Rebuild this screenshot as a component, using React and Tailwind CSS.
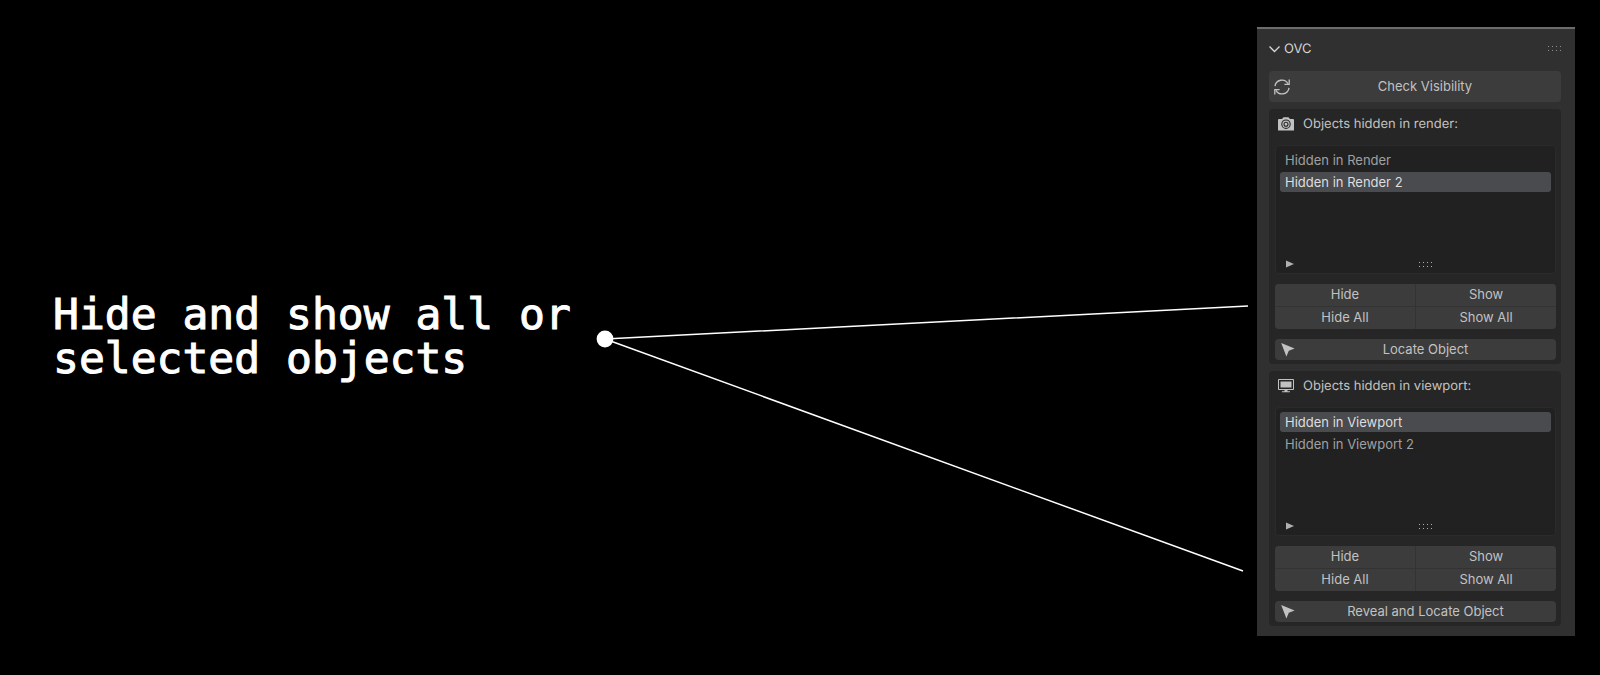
import { useState } from "react";

function RefreshIcon() {
  return (
    <svg className="h-4 w-4" viewBox="0 0 16 16" fill="none" stroke="currentColor" strokeWidth="1.3">
      <path d="M1 7.2A7 7 0 0 1 14 4.6" />
      <path d="M15 8.8A7 7 0 0 1 2 11.4" />
      <path d="M15.2.6v4.7h-4.8" />
      <path d="M.8 15.4v-4.7h4.8" />
    </svg>
  );
}

function CameraIcon() {
  return (
    <svg className="h-4 w-4" viewBox="0 0 16 16" fill="none">
      <path fill="currentColor" d="M1 3h3l1.6-1.8h4.8L12 3h3a1 1 0 0 1 1 1v10.4H0V4a1 1 0 0 1 1-1z" />
      <circle cx="8" cy="8.2" r="4.2" stroke="#282828" strokeWidth="1.1" />
      <circle cx="8" cy="8.2" r="2" stroke="#282828" strokeWidth="1.1" />
    </svg>
  );
}

function MonitorIcon() {
  return (
    <svg className="h-4 w-4" viewBox="0 0 16 16" fill="none">
      <path stroke="currentColor" d="M.5 1.5h15v10H.5z" />
      <path fill="currentColor" d="M2.5 3.5h11v6h-11zM6.5 12h3v1.3h-3zM4 13.3h8v1H4z" />
    </svg>
  );
}

function CursorIcon() {
  return (
    <svg className="h-4 w-4" viewBox="0 0 16 16" fill="currentColor">
      <path d="M1.2 1 14.6 6.6 8.8 8.8 6.4 14.4z" />
    </svg>
  );
}

function Grip() {
  return (
    <svg className="h-[5px] w-[13px]" viewBox="0 0 13 5" fill="currentColor">
      {[0, 4].map((y) =>
        [0, 4, 8, 12].map((x) => <rect key={`${x}-${y}`} x={x} y={y} width="1" height="1" />)
      )}
    </svg>
  );
}

function WideButton({ icon, children, className = "" }) {
  return (
    <button type="button" className={`flex w-full items-center rounded-sm bg-[#3c3c3c] px-[5px] ${className}`}>
      <span className="w-5">{icon}</span>
      <span className="flex-1 pb-[2px]">{children}</span>
    </button>
  );
}

function ObjectSection({ icon, title, items, initial, action }) {
  const [selected, setSelected] = useState(initial);

  return (
    <section className="rounded-sm bg-[#262626] pr-[5px] pb-1 pl-[6px]">
      <h3 className="flex h-9 items-center gap-[9px] px-[3px] pb-[6px]">
        {icon}
        {title}
      </h3>

      <div className="flex h-[129px] flex-col rounded-sm border border-[#2b2b2b] bg-[#212121] px-1 pt-1 pb-[3px]">
        <ul className="flex flex-1 flex-col gap-[2px]">
          {items.map((item) => (
            <li key={item}>
              <button
                type="button"
                onClick={() => setSelected(item)}
                className={
                  item === selected
                    ? "block h-5 w-full rounded-[3px] bg-[#4a4b4e] px-[5px] text-left text-[#dedede]"
                    : "block h-5 w-full rounded-[3px] px-[5px] text-left text-[#a0a0a0]"
                }
              >
                {item}
              </button>
            </li>
          ))}
        </ul>
        <div className="grid h-3 grid-cols-3 items-center px-[6px] text-[#b0b0b0]">
          <svg className="h-2 w-2" viewBox="0 0 8 8" fill="currentColor">
            <path d="M0 .5 8 4 0 7.5z" />
          </svg>
          <span className="flex justify-center pl-5">
            <Grip />
          </span>
        </div>
      </div>

      {/* Visibility toggles */}
      <div className="mt-[10px] grid grid-cols-2 gap-px overflow-hidden rounded-sm bg-[#333333]">
        {["Hide", "Show", "Hide All", "Show All"].map((label) => (
          <button key={label} type="button" className="h-[22px] bg-[#3c3c3c] pb-[2px]">
            {label}
          </button>
        ))}
      </div>

      <WideButton icon={<CursorIcon />} className="mt-[10px] h-[21px]">
        {action}
      </WideButton>
    </section>
  );
}

function Panel() {
  return (
    <aside className="w-[318px] shrink-0 border-t-2 border-[#6c6c6c] bg-[#303030] pr-[14px] pb-[10px] pl-3 font-['Inter',sans-serif] text-[13px] leading-5 text-[#c2c2c2] [text-rendering:geometricPrecision]">
      <header className="flex h-[42px] items-center justify-between pb-[3px]">
        <h2 className="flex items-center gap-1 text-[#d6d6d6]">
          <svg className="h-[10px] w-[11px]" viewBox="0 0 11 10" fill="none" stroke="currentColor" strokeWidth="1.3">
            <path d="m.5 2.5 5 5 5-5" />
          </svg>
          OVC
        </h2>
        <span className="text-[#8c8c8c]">
          <Grip />
        </span>
      </header>

      <WideButton icon={<RefreshIcon />} className="mb-[7px] h-[31px]">
        Check Visibility
      </WideButton>

      <div className="flex flex-col gap-[7px]">
        <ObjectSection
          icon={<CameraIcon />}
          title="Objects hidden in render:"
          items={["Hidden in Render", "Hidden in Render 2"]}
          initial="Hidden in Render 2"
          action="Locate Object"
        />
        <ObjectSection
          icon={<MonitorIcon />}
          title="Objects hidden in viewport:"
          items={["Hidden in Viewport", "Hidden in Viewport 2"]}
          initial="Hidden in Viewport"
          action="Reveal and Locate Object"
        />
      </div>
    </aside>
  );
}

export default function App() {
  return (
    <main className="flex min-h-screen items-center bg-black pr-[25px] pb-3 pl-[53px]">
      <h1 className="w-[519px] shrink-0 pt-2 font-['DejaVu_Sans_Mono',monospace] text-[43px] leading-[44px] text-white [-webkit-text-stroke:1px_white]">
        Hide and show all or
        <br />
        selected objects
      </h1>

      {/* Callout from the heading to both button groups */}
      <svg className="mr-2 ml-[7px] min-w-0 flex-1" viewBox="0 0 670 487" fill="none" stroke="#fff" strokeWidth="1.5">
        <path d="M26 251 669 218M26 251l638 232" />
        <circle cx="26" cy="251" r="8.4" fill="#fff" stroke="none" />
      </svg>

      <Panel />
    </main>
  );
}
